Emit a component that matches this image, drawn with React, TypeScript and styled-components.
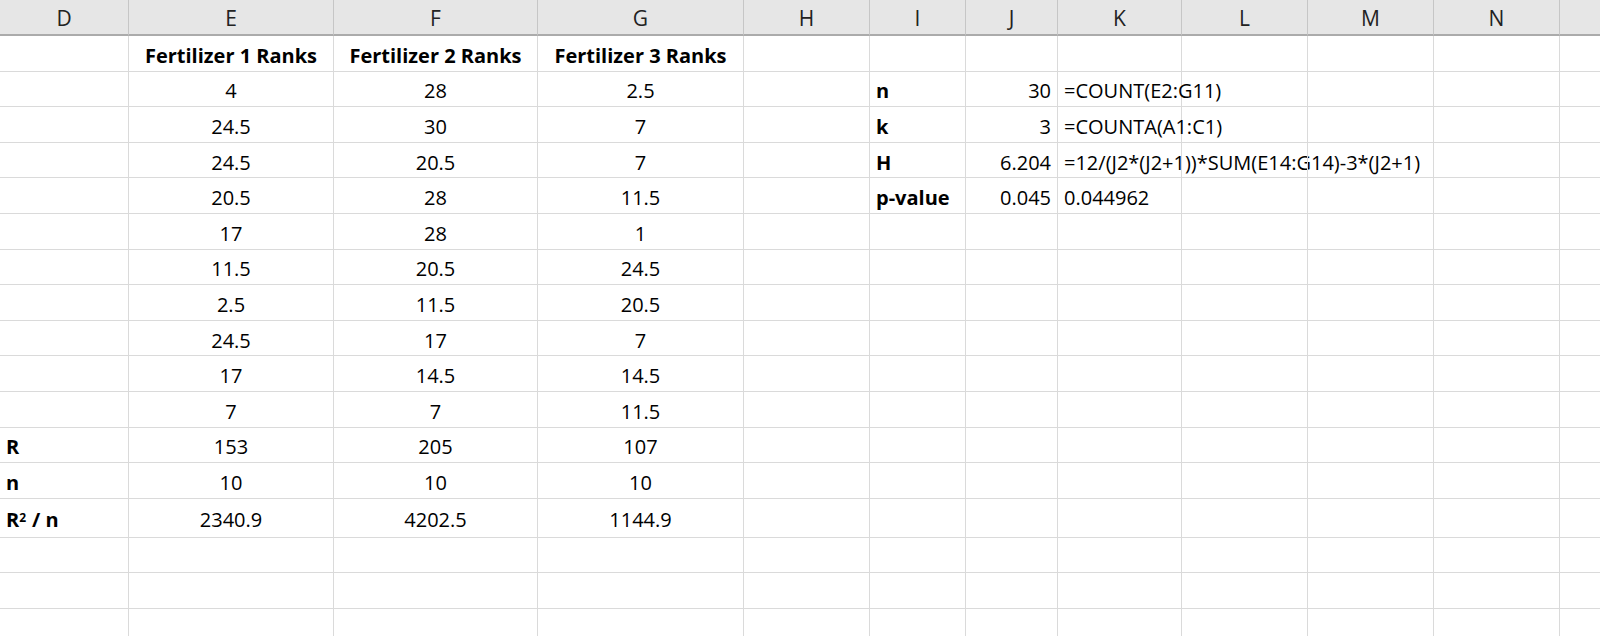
import React from "react";
import styled, { createGlobalStyle } from "styled-components";

const Global = createGlobalStyle`
  html, body { margin: 0; padding: 0; background: #fff; overflow: hidden; }
  body { font-family: "Open Sans", "Lato", sans-serif; }
`;

const cols = ["D","E","F","G","H","I","J","K","L","M","N","O"];
const widths = [129,205,204,206,126,96,92,124,126,126,126,60];

const Sheet = styled.div`
  display: grid;
  grid-template-columns: ${widths.map((w) => w + "px").join(" ")};
  grid-template-rows: 36px repeat(13, 35.6px) 39px repeat(4, 35.6px);
  width: 1600px;
  height: 636px;
  overflow: hidden;
`;

const Head = styled.div`
  background: #e6e6e6;
  border-right: 1px solid #c6c6c6;
  border-bottom: 2px solid #ababab;
  display: flex;
  align-items: center;
  justify-content: center;
  font-size: 21px;
  color: #222;
  padding-top: 2px;
`;

const Cell = styled.div<{ $align?: "left" | "center" | "right"; $bold?: boolean }>`
  border-right: 1px solid #dadada;
  border-bottom: 1px solid #dadada;
  display: flex;
  align-items: center;
  justify-content: ${(p) => (p.$align === "right" ? "flex-end" : p.$align === "center" ? "center" : "flex-start")};
  padding: 4px 6px 0 6px;
  font-size: 20px;
  font-weight: ${(p) => (p.$bold ? 700 : 400)};
  color: #000;
  white-space: nowrap;
  overflow: visible;
  min-width: 0;
`;

const Sup = styled.sup`
  font-size: 12px;
  position: relative;
  top: -2px;
  margin-right: 6px;
`;

type C = { t?: React.ReactNode; a?: "left" | "center" | "right"; b?: boolean };

const e = [4,24.5,24.5,20.5,17,11.5,2.5,24.5,17,7];
const f = [28,30,20.5,28,28,20.5,11.5,17,14.5,7];
const g = [2.5,7,7,11.5,1,24.5,20.5,7,14.5,11.5];
const side: [string, string, string][] = [
  ["n","30","=COUNT(E2:G11)"],
  ["k","3","=COUNTA(A1:C1)"],
  ["H","6.204","=12/(J2*(J2+1))*SUM(E14:G14)-3*(J2+1)"],
  ["p-value","0.045","0.044962"],
];

function buildRows(): C[][] {
  const rows: C[][] = [];
  const blank = (): C[] => cols.map(() => ({}));
  const r0 = blank();
  r0[1] = { t: "Fertilizer 1 Ranks", a: "center", b: true };
  r0[2] = { t: "Fertilizer 2 Ranks", a: "center", b: true };
  r0[3] = { t: "Fertilizer 3 Ranks", a: "center", b: true };
  rows.push(r0);
  for (let i = 0; i < 10; i++) {
    const r = blank();
    r[1] = { t: String(e[i]), a: "center" };
    r[2] = { t: String(f[i]), a: "center" };
    r[3] = { t: String(g[i]), a: "center" };
    if (side[i]) {
      r[5] = { t: side[i][0], b: true };
      r[6] = { t: side[i][1], a: "right" };
      r[7] = { t: side[i][2] };
    }
    rows.push(r);
  }
  const sums: [React.ReactNode, number[]][] = [
    ["R", [153, 205, 107]],
    ["n", [10, 10, 10]],
    [<>R<Sup>2</Sup>/ n</>, [2340.9, 4202.5, 1144.9]],
  ];
  for (const [lab, v] of sums) {
    const r = blank();
    r[0] = { t: lab, b: true };
    r[1] = { t: String(v[0]), a: "center" };
    r[2] = { t: String(v[1]), a: "center" };
    r[3] = { t: String(v[2]), a: "center" };
    rows.push(r);
  }
  for (let i = 0; i < 4; i++) rows.push(blank());
  return rows;
}

export default function App() {
  const rows = buildRows();
  return (
    <>
      <Global />
      <Sheet>
        {cols.map((c) => (
          <Head key={c}>{c === "O" ? "" : c}</Head>
        ))}
        {rows.map((r, ri) =>
          r.map((c, ci) => (
            <Cell key={ri + "-" + ci} $align={c.a} $bold={c.b}>
              {c.t}
            </Cell>
          ))
        )}
      </Sheet>
    </>
  );
}
